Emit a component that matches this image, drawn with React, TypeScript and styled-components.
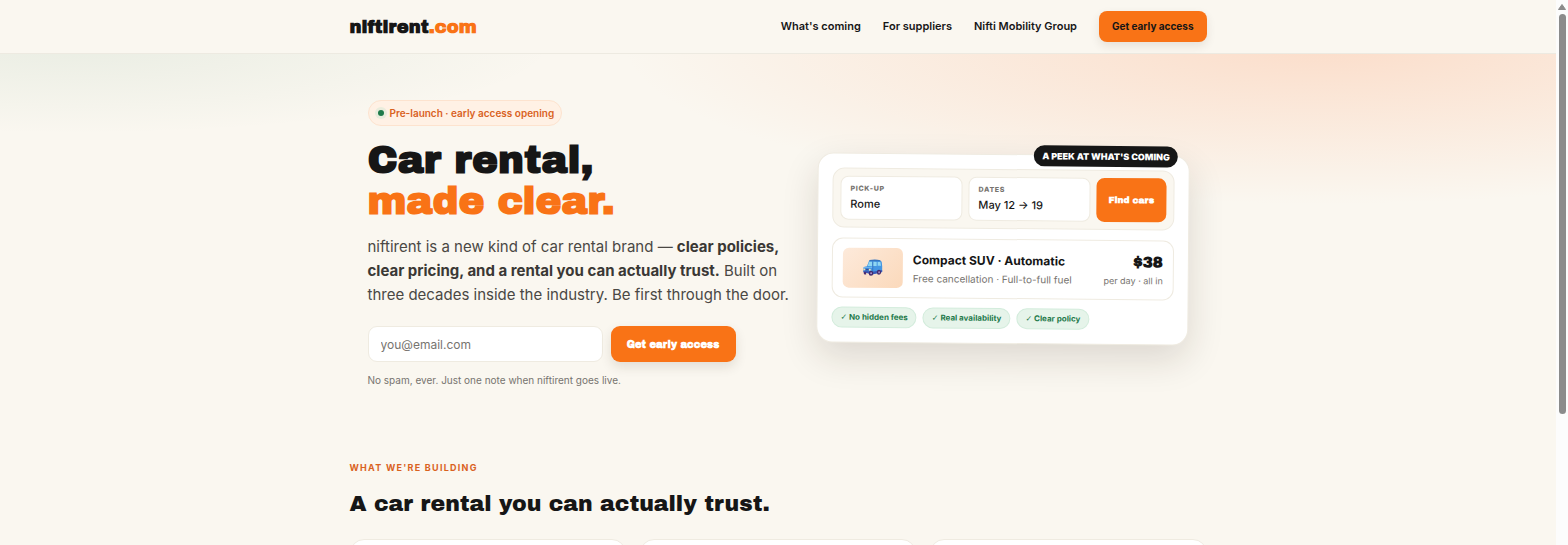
import React from "react";
import styled, { createGlobalStyle, css } from "styled-components";

const ink = "#161616";
const orange = "#f97316";
const rust = "#d9621f";
const cream = "#faf7f0";
const line = "#efebe1";
const body = `Inter, "Liberation Sans", sans-serif`;
const display = `"Archivo Black", Inter, "Liberation Sans", sans-serif`;

const GlobalStyle = createGlobalStyle`
  *, *::before, *::after { box-sizing: border-box; }
  body { margin: 0; background: ${cream}; color: ${ink}; font-family: ${body}; }
  h1, h2, p { margin: 0; }
  a { color: inherit; text-decoration: none; }
  button, input { font-family: inherit; }
`;

const Window = styled.div`
  display: flex;
  height: 100vh;
  overflow: hidden;
`;

const Page = styled.div`
  flex: 1;
  min-width: 0;
  overflow: hidden;
`;

const ScrollTrack = styled.div`
  flex: none;
  width: 12px;
  background: #fcfcfc;
  display: flex;
  flex-direction: column;
  align-items: center;
  padding-top: 4px;
  gap: 4px;
`;

const ScrollThumb = styled.div`
  width: 7px;
  height: 74%;
  border-radius: 4px;
  background: #8b8b8b;
`;

const Container = styled.div`
  width: 100%;
  max-width: 857px;
  margin: 0 auto;
`;

const Header = styled.header`
  border-bottom: 1px solid #edeae1;
  background: ${cream};
`;

const HeaderRow = styled(Container)`
  display: flex;
  align-items: center;
  justify-content: space-between;
  height: 53px;
`;

const Logo = styled.a`
  font-family: ${display};
  font-weight: 900;
  font-size: 18px;
  line-height: 24px;

  span { color: ${orange}; }
`;

const Nav = styled.nav`
  display: flex;
  align-items: center;
  gap: 22px;
  font-size: 11px;
  line-height: 15px;
  font-weight: 600;
`;

const NavButton = styled.a`
  padding: 8px 13px;
  border-radius: 8px;
  background: ${orange};
  font-size: 10px;
  font-weight: 700;
  box-shadow: 0 4px 10px rgba(60, 40, 20, 0.1);
`;

const Hero = styled.section`
  padding: 46px 0;
  background:
    radial-gradient(700px 160px at 85% -10px, rgba(253, 186, 150, 0.42), rgba(253, 196, 150, 0) 100%),
    radial-gradient(480px 90px at 5% -10px, rgba(46, 125, 80, 0.08), rgba(46, 125, 80, 0) 100%);
`;

const HeroGrid = styled(Container)`
  display: grid;
  grid-template-columns: 423fr 372fr;
  gap: 26px;
  align-items: center;
  padding: 0 18px;
`;

const Badge = styled.div`
  display: inline-flex;
  align-items: center;
  gap: 6px;
  height: 26px;
  padding: 0 7px 0 9px;
  border: 1px solid #fde3cf;
  border-radius: 13px;
  background: #fff1e5;
  color: ${rust};
  font-size: 10px;
  line-height: 16px;
  font-weight: 600;
`;

const Dot = styled.i`
  width: 6px;
  height: 6px;
  border-radius: 50%;
  background: #1f7a4a;
  box-shadow: 0 0 0 3px #e9ecdc;
`;

const Title = styled.h1`
  margin-top: 14px;
  font-family: ${display};
  font-weight: 900;
  font-size: 39px;
  line-height: 41px;

  span { display: block; color: ${orange}; }
`;

const Lead = styled.p`
  margin-top: 13px;
  color: #4a4844;
  font-size: 15px;
  line-height: 24px;

  strong { color: #3a3835; font-weight: 700; }
`;

const SignupForm = styled.form`
  display: flex;
  gap: 8px;
  margin-top: 19px;
`;

const EmailInput = styled.input`
  width: 235px;
  height: 36px;
  padding: 0 12px;
  border: 1px solid ${line};
  border-radius: 9px;
  background: #fff;
  font-size: 12px;

  &::placeholder { color: #77746f; opacity: 1; }
`;

const solidButton = css`
  border: 0;
  background: ${orange};
  color: #fff;
  font-family: ${display};
  font-weight: 900;
`;

const SubmitButton = styled.button`
  ${solidButton}
  width: 125px;
  border-radius: 9px;
  padding: 0;
  font-size: 10px;
  box-shadow: 0 5px 12px rgba(60, 40, 20, 0.12);
`;

const Note = styled.p`
  margin-top: 10px;
  color: #77746f;
  font-size: 10px;
  line-height: 16px;
`;

const PreviewCard = styled.div`
  position: relative;
  margin-top: 9px;
  padding: 14px;
  border: 1px solid ${line};
  border-radius: 16px;
  background: #fff;
  box-shadow: 0 14px 36px rgba(40, 30, 15, 0.14);
  transform: rotate(0.5deg);
`;

const PreviewTag = styled.div`
  position: absolute;
  top: -10px;
  right: 11px;
  height: 21px;
  padding: 0 8px;
  border-radius: 11px;
  background: ${ink};
  color: #fff;
  font-size: 9px;
  line-height: 21px;
  font-weight: 900;
  white-space: nowrap;
`;

const SearchBar = styled.div`
  display: grid;
  grid-template-columns: 1fr 1fr 70px;
  gap: 6px;
  padding: 7px;
  border: 1px solid ${line};
  border-radius: 12px;
  background: ${cream};
`;

const Field = styled.div`
  height: 44px;
  padding: 5px 9px;
  border: 1px solid ${line};
  border-radius: 8px;
  background: #fff;
  font-size: 11px;
  line-height: 16px;
  font-weight: 500;

  small {
    display: block;
    color: #77746f;
    font-size: 7px;
    line-height: 14px;
    font-weight: 800;
    letter-spacing: 0.1em;
  }
`;

const FindButton = styled.button`
  ${solidButton}
  border-radius: 8px;
  padding: 0;
  font-size: 9px;
`;

const Offer = styled.div`
  display: flex;
  align-items: center;
  gap: 10px;
  height: 60px;
  margin-top: 10px;
  padding: 0 10px;
  border: 1px solid ${line};
  border-radius: 11px;
`;

const Thumb = styled.div`
  display: grid;
  place-items: center;
  width: 60px;
  height: 40px;
  border-radius: 6px;
  background: linear-gradient(135deg, #fdeadb, #fbd9bb);
`;

const OfferText = styled.div`
  flex: 1;
  color: #77746f;
  font-size: 10px;
  line-height: 16px;
  white-space: nowrap;

  strong {
    display: block;
    color: ${ink};
    font-weight: 700;
    font-size: 12px;
    line-height: 20px;
  }
`;

const Price = styled.div`
  color: #77746f;
  font-size: 9px;
  line-height: 16px;
  text-align: right;
  white-space: nowrap;

  strong {
    display: block;
    color: ${ink};
    font-family: ${display};
    font-weight: 900;
    font-size: 15px;
    line-height: 22px;
  }
`;

const Perks = styled.div`
  display: flex;
  gap: 6px;
  margin-top: 9px;
`;

const Perk = styled.span`
  height: 21px;
  padding: 0 8px;
  border: 1px solid #d3ecdc;
  border-radius: 11px;
  background: #e6f4ea;
  color: #1f7a4a;
  font-size: 8px;
  line-height: 19px;
  font-weight: 700;
  white-space: nowrap;
`;

const Check = styled.span`
  font-family: "DejaVu Sans", sans-serif;
  font-weight: 700;
`;

const Building = styled(Container)`
  padding-top: 26px;
`;

const Eyebrow = styled.p`
  color: ${rust};
  font-size: 9px;
  line-height: 16px;
  font-weight: 700;
  letter-spacing: 0.14em;
`;

const SectionTitle = styled.h2`
  margin-top: 12px;
  font-family: ${display};
  font-weight: 400;
  font-size: 22px;
  line-height: 32px;
`;

const FeatureGrid = styled.div`
  display: grid;
  grid-template-columns: repeat(3, 1fr);
  gap: 14px;
  margin-top: 19px;
`;

const Feature = styled.article`
  height: 140px;
  border: 1px solid ${line};
  border-radius: 14px;
  background: #fff;
`;

const CarIcon = () => (
  <svg width="20" height="18" viewBox="0 0 20 18" aria-hidden="true">
    <path d="M6.2 2h11.4q1.1 0 1.3 1.2l.5 4.4v5.4l-9 2.4-8.9-1.6q-.9-.2-.9-1.2V9.4q0-1.1 1.1-1.4l2.4-.5z" fill="#4596e2" />
    <path d="M6.6 1.2Q12 .2 17.6 1.2v1.1H6.2z" fill="#3474be" />
    <path d="M6.2 3h3.2v4.3H4.9zM10.3 3h3.5v4.1h-3.5zM14.8 3h2.7l.7 3.9h-3.4z" fill="#8fd6f2" />
    <path d="M1 8.2h8.6v1H.8z" fill="#6cb4ee" />
    <path d="M.6 11.6l9.2 1.4 9.6-2v2l-9 2.4-8.9-1.6q-.9-.2-.9-1.2z" fill="#3b57b5" />
    <path d="M9.9 2.6v11" stroke="#2f69b4" strokeWidth=".7" />
    <path d="M2.6 10h3.2v1.6H2.6z" fill="#2d4f9e" />
    <circle cx="1.6" cy="10.6" r=".9" fill="#f2dcae" />
    <circle cx="7" cy="11" r="1" fill="#f2dcae" />
    <path d="M1 13.2h2.4v2.6H2.2Q1 15.8 1 14.4z" fill="#4a2d72" />
    <ellipse cx="8.2" cy="14.4" rx="2.3" ry="2.6" fill="#432a6c" />
    <ellipse cx="16.2" cy="13.4" rx="2.1" ry="2.5" fill="#432a6c" />
    <ellipse cx="8.3" cy="14.4" rx=".9" ry="1.1" fill="#b09ad4" />
    <ellipse cx="16.3" cy="13.4" rx=".8" ry="1.1" fill="#b09ad4" />
  </svg>
);

const perks = ["No hidden fees", "Real availability", "Clear policy"];

export default function App() {
  return (
    <Window>
      <GlobalStyle />
      <Page>
        <Header>
          <HeaderRow>
            <Logo href="#">niftirent<span>.com</span></Logo>
            <Nav>
              <a href="#coming">What's coming</a>
              <a href="#suppliers">For suppliers</a>
              <a href="#group">Nifti Mobility Group</a>
              <NavButton href="#signup">Get early access</NavButton>
            </Nav>
          </HeaderRow>
        </Header>
        <main>
          <Hero>
            <HeroGrid>
              <div>
                <Badge><Dot />Pre-launch · early access opening</Badge>
                <Title>Car rental,<span>made clear.</span></Title>
                <Lead>
                  niftirent is a new kind of car rental brand — <strong>clear policies,<br />
                  clear pricing, and a rental you can actually trust.</strong> Built on<br />
                  three decades inside the industry. Be first through the door.
                </Lead>
                <SignupForm id="signup" onSubmit={(e) => e.preventDefault()}>
                  <EmailInput type="email" aria-label="Email address" placeholder="you@email.com" />
                  <SubmitButton type="submit">Get early access</SubmitButton>
                </SignupForm>
                <Note>No spam, ever. Just one note when niftirent goes live.</Note>
              </div>
              <PreviewCard>
                <PreviewTag>A PEEK AT WHAT'S COMING</PreviewTag>
                <SearchBar>
                  <Field><small>PICK-UP</small>Rome</Field>
                  <Field><small>DATES</small>May 12 → 19</Field>
                  <FindButton type="button">Find cars</FindButton>
                </SearchBar>
                <Offer>
                  <Thumb><CarIcon /></Thumb>
                  <OfferText><strong>Compact SUV · Automatic</strong>Free cancellation · Full-to-full fuel</OfferText>
                  <Price><strong>$38</strong>per day · all in</Price>
                </Offer>
                <Perks>
                  {perks.map((perk) => <Perk key={perk}><Check>✓</Check> {perk}</Perk>)}
                </Perks>
              </PreviewCard>
            </HeroGrid>
          </Hero>
          <Building as="section" id="coming">
            <Eyebrow>WHAT WE'RE BUILDING</Eyebrow>
            <SectionTitle>A car rental you can actually trust.</SectionTitle>
            <FeatureGrid>
              <Feature />
              <Feature />
              <Feature />
            </FeatureGrid>
          </Building>
        </main>
      </Page>
      <ScrollTrack aria-hidden="true">
        <svg width="8" height="6" viewBox="0 0 8 6"><path d="M4 .5 7.5 5.5h-7z" fill="#8b8b8b" stroke="#8b8b8b" strokeLinejoin="round" /></svg>
        <ScrollThumb />
      </ScrollTrack>
    </Window>
  );
}
